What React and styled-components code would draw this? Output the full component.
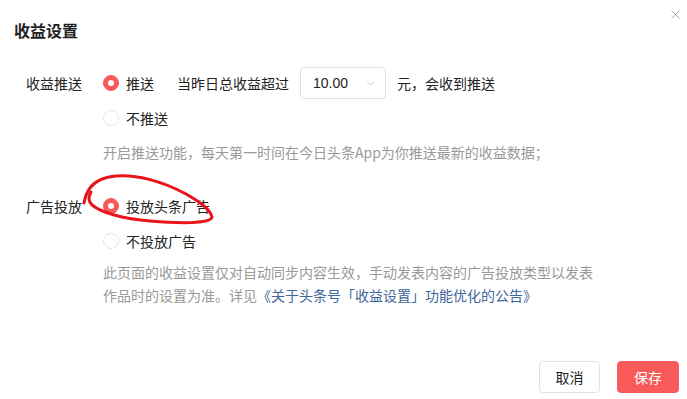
import React from "react";
import styled, { createGlobalStyle } from "styled-components";
import { ChevronDown, X } from "lucide-react";

const GlobalStyle = createGlobalStyle`
  body {
    margin: 0;
    background: #fff;
    font-family: "Noto Sans CJK SC", "Noto Sans", "Liberation Sans", sans-serif;
    color: #222;
  }
`;

const Dialog = styled.div`
  position: relative;
  width: 687px;
  height: 399px;
  background: #fff;
  display: flex;
  flex-direction: column;
  box-sizing: border-box;
  padding-bottom: 6px;
`;

const Header = styled.div`
  padding: 18px 14px 0;
`;

const Title = styled.h2`
  margin: 0;
  font-size: 16px;
  line-height: 24px;
  font-weight: 700;
  color: #222;
`;

const CloseButton = styled.button`
  position: absolute;
  top: 7px;
  right: 4px;
  border: none;
  background: none;
  padding: 0;
  color: #999;
  display: flex;
  cursor: pointer;
`;

const Section = styled.div`
  display: flex;
  margin-top: ${(props) => props.$top}px;
`;

const Label = styled.div`
  width: 56px;
  margin-left: 26px;
  margin-right: 21px;
  height: 32px;
  line-height: 32px;
  font-size: 14px;
  color: #222;
  flex-shrink: 0;
`;

const Content = styled.div`
  display: flex;
  flex-direction: column;
`;

const OptionRow = styled.div`
  display: flex;
  align-items: center;
  height: 32px;
  font-size: 14px;
  margin-top: ${(props) => props.$top || 0}px;
`;

const Radio = styled.span`
  width: 16px;
  height: 16px;
  border-radius: 50%;
  box-sizing: border-box;
  margin-right: 7px;
  flex-shrink: 0;
  display: flex;
  align-items: center;
  justify-content: center;
  background: ${(props) => (props.$checked ? "#f85959" : "#fff")};
  border: 1px solid ${(props) => (props.$checked ? "#f85959" : "#e6e6e6")};

  &::after {
    content: "";
    width: 6px;
    height: 6px;
    border-radius: 50%;
    background: #fff;
    display: ${(props) => (props.$checked ? "block" : "none")};
  }
`;

const Inline = styled.span`
  margin-left: ${(props) => props.$left || 0}px;
  white-space: nowrap;
`;

const Select = styled.div`
  width: 86px;
  height: 32px;
  box-sizing: border-box;
  border: 1px solid #e2e2e2;
  border-radius: 4px;
  margin-left: 11px;
  margin-right: 11px;
  padding: 0 8px 0 12px;
  display: flex;
  align-items: center;
  justify-content: space-between;
  font-size: 14px;
  font-family: "Liberation Sans", "Noto Sans CJK SC", sans-serif;
  color: #bbb;

  span {
    color: #222;
  }
`;

const Desc = styled.p`
  margin: ${(props) => props.$top}px 0 0;
  font-size: 14px;
  line-height: ${(props) => props.$lh}px;
  color: #999;
  max-width: 496px;
`;

const Link = styled.a`
  color: #406599;
  text-decoration: none;
`;

const Footer = styled.div`
  margin-top: auto;
  display: flex;
  justify-content: flex-end;
  gap: 17px;
  padding-right: 8px;
`;

const Button = styled.button`
  height: 32px;
  min-width: ${(props) => (props.$primary ? 62 : 61)}px;
  box-sizing: border-box;
  border-radius: 4px;
  font-size: 14px;
  font-family: "Noto Sans CJK SC", sans-serif;
  border: 1px solid ${(props) => (props.$primary ? "#f85959" : "#e2e2e2")};
  background: ${(props) => (props.$primary ? "#f85959" : "#fff")};
  color: ${(props) => (props.$primary ? "#fff" : "#222")};
  padding: 0 14px;
`;

const Annotation = styled.svg`
  position: absolute;
  left: 0;
  top: 0;
  pointer-events: none;
`;

export default function App() {
  return (
    <>
      <GlobalStyle />
      <Dialog>
        <Header>
          <Title>收益设置</Title>
        </Header>
        <CloseButton>
          <X size={15} strokeWidth={1.3} />
        </CloseButton>

        <Section $top={25}>
          <Label>收益推送</Label>
          <Content>
            <OptionRow>
              <Radio $checked />
              <Inline>推送</Inline>
              <Inline $left={23}>当昨日总收益超过</Inline>
              <Select>
                <span>10.00</span>
                <ChevronDown size={13} strokeWidth={1.3} />
              </Select>
              <Inline>元，会收到推送</Inline>
            </OptionRow>
            <OptionRow $top={3}>
              <Radio />
              <Inline>不推送</Inline>
            </OptionRow>
            <Desc $top={7} $lh={22}>
              开启推送功能，每天第一时间在今日头条App为你推送最新的收益数据；
            </Desc>
          </Content>
        </Section>

        <Section $top={27}>
          <Label>广告投放</Label>
          <Content>
            <OptionRow>
              <Radio $checked />
              <Inline>投放头条广告</Inline>
            </OptionRow>
            <OptionRow $top={3}>
              <Radio />
              <Inline>不投放广告</Inline>
            </OptionRow>
            <Desc $top={4} $lh={23}>
              此页面的收益设置仅对自动同步内容生效，手动发表内容的广告投放类型以发表作品时的设置为准。详见
              <Link href="#">《关于头条号「收益设置」功能优化的公告》</Link>
            </Desc>
          </Content>
        </Section>

        <Footer>
          <Button>取消</Button>
          <Button $primary>保存</Button>
        </Footer>

        <Annotation width="687" height="399" viewBox="0 0 687 399">
          <path
            d="M84 203 C85 197, 87 192, 90 188 C95 181, 104 177, 116 176 C135 174, 162 181, 186 194 C200 202, 210 209, 212 217 C211 223, 186 224, 150 221 C124 219, 102 213, 92 205 C88 201, 88 197, 91 192"
            fill="none"
            stroke="#e8141a"
            strokeWidth="3"
            strokeLinecap="round"
            strokeLinejoin="round"
          />
        </Annotation>
      </Dialog>
    </>
  );
}
